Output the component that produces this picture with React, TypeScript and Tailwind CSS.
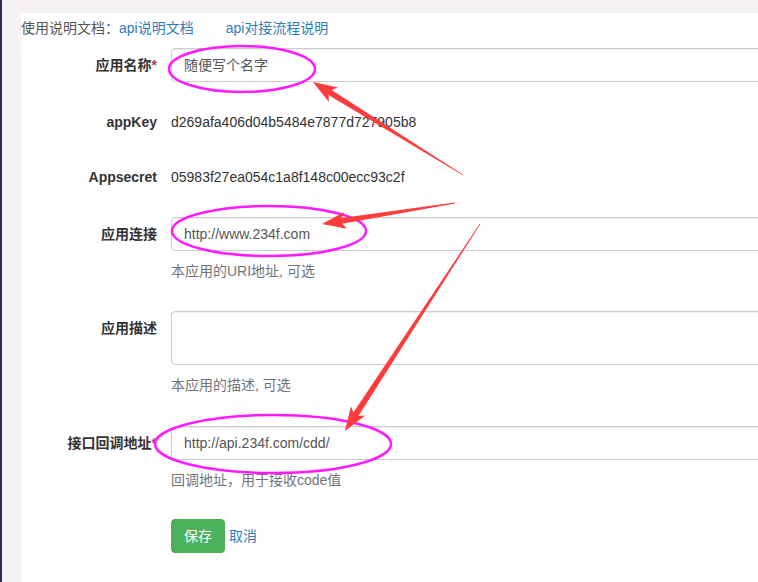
import React from "react";

const font = { fontFamily: '"Liberation Sans", "Noto Sans CJK SC", sans-serif' };

// tapered red arrow (tail -> tip)
function arrowPoints(x1: number, y1: number, x2: number, y2: number) {
  const dx = x2 - x1;
  const dy = y2 - y1;
  const len = Math.hypot(dx, dy);
  const ux = dx / len;
  const uy = dy / len;
  const nx = -uy;
  const ny = ux;
  const headLen = 20;
  const headW = 17;
  const shaftW = 6;
  const neckX = x2 - ux * headLen;
  const neckY = y2 - uy * headLen;
  const wingX = x2 - ux * (headLen + 4);
  const wingY = y2 - uy * (headLen + 4);
  const pts = [
    [x1 + nx * 0.4, y1 + ny * 0.4],
    [neckX + (nx * shaftW) / 2, neckY + (ny * shaftW) / 2],
    [wingX + (nx * headW) / 2, wingY + (ny * headW) / 2],
    [x2, y2],
    [wingX - (nx * headW) / 2, wingY - (ny * headW) / 2],
    [neckX - (nx * shaftW) / 2, neckY - (ny * shaftW) / 2],
    [x1 - nx * 0.4, y1 - ny * 0.4],
  ];
  return pts.map((p) => `${p[0].toFixed(1)},${p[1].toFixed(1)}`).join(" ");
}

function Label({ text, star }: { text: string; star?: boolean }) {
  return (
    <div className="w-[136px] shrink-0 text-right font-bold text-[14px] leading-[20px] pt-[7px] text-[#333]">
      {text}
      {star && <span className="text-[#a94442]">*</span>}
    </div>
  );
}

function Input({ value }: { value: string }) {
  return (
    <div className="w-[620px] h-[34px] border border-[#ccc] rounded-l-[4px] shadow-[inset_0_1px_1px_rgba(0,0,0,0.075)] bg-white px-[12px] flex items-center text-[14px] text-[#555]">
      {value}
    </div>
  );
}

function Help({ text }: { text: string }) {
  return <div className="mt-[10px] text-[14px] leading-[20px] text-[#737373]">{text}</div>;
}

export default function App() {
  return (
    <div className="relative w-[758px] h-[582px] overflow-hidden bg-[#f6f2f3] flex" style={font}>
      <div className="w-[2px] bg-[#2c2f55] shrink-0" />
      <div className="flex-1 pl-[19px] pt-[13px]">
        <div className="bg-white h-full w-[800px] pt-[5px]">
          {/* 文档链接 */}
          <div className="text-[14px] leading-[20px] text-[#555] flex">
            <span>使用说明文档：</span>
            <span className="text-[#337ab7]">api说明文档</span>
            <span className="text-[#337ab7] ml-[32px]">api对接流程说明</span>
          </div>

          {/* 应用名称 */}
          <div className="flex gap-[14px] mt-[10px]">
            <Label text="应用名称" star />
            <Input value="随便写个名字" />
          </div>

          <div className="flex gap-[14px] mt-[23px] h-[34px]">
            <Label text="appKey" />
            <div className="pt-[7px] text-[14px] leading-[20px] text-[#333]">d269afa406d04b5484e7877d727905b8</div>
          </div>

          <div className="flex gap-[14px] mt-[21px] h-[34px]">
            <Label text="Appsecret" />
            <div className="pt-[7px] text-[14px] leading-[20px] text-[#333]">05983f27ea054c1a8f148c00ecc93c2f</div>
          </div>

          <div className="flex gap-[14px] mt-[23px]">
            <Label text="应用连接" />
            <div>
              <Input value="http://www.234f.com" />
              <Help text="本应用的URI地址, 可选" />
            </div>
          </div>

          <div className="flex gap-[14px] mt-[30px]">
            <Label text="应用描述" />
            <div>
              <div className="w-[620px] h-[54px] border border-[#ccc] rounded-l-[4px] shadow-[inset_0_1px_1px_rgba(0,0,0,0.075)] bg-white" />
              <Help text="本应用的描述, 可选" />
            </div>
          </div>

          <div className="flex gap-[14px] mt-[31px]">
            <Label text="接口回调地址" star />
            <div>
              <Input value="http://api.234f.com/cdd/" />
              <Help text="回调地址，用于接收code值" />
            </div>
          </div>

          <div className="flex items-center mt-[29px] ml-[150px]">
            <button className="h-[34px] px-[12px] rounded-[4px] bg-[#4cb15c] border border-[#4cae4c] text-white text-[14px] leading-[20px]">
              保存
            </button>
            <span className="ml-[4px] text-[14px] text-[#337ab7]">取消</span>
          </div>
        </div>
      </div>

      {/* 标注 */}
      <svg className="absolute inset-0 pointer-events-none" width="758" height="582" viewBox="0 0 758 582">
        <ellipse cx="242" cy="69" rx="73" ry="23" fill="none" stroke="#ff1aff" strokeWidth="2.5" />
        <ellipse cx="269" cy="231" rx="97" ry="25" fill="none" stroke="#ff1aff" strokeWidth="2.5" />
        <ellipse cx="273" cy="444" rx="118" ry="29" fill="none" stroke="#ff1aff" strokeWidth="2.5" />
        <polygon points={arrowPoints(463, 175, 313, 82)} fill="#ff3b3b" />
        <polygon points={arrowPoints(455, 203, 322, 224)} fill="#ff3b3b" />
        <polygon points={arrowPoints(480, 224, 345, 431)} fill="#ff3b3b" />
      </svg>
    </div>
  );
}
